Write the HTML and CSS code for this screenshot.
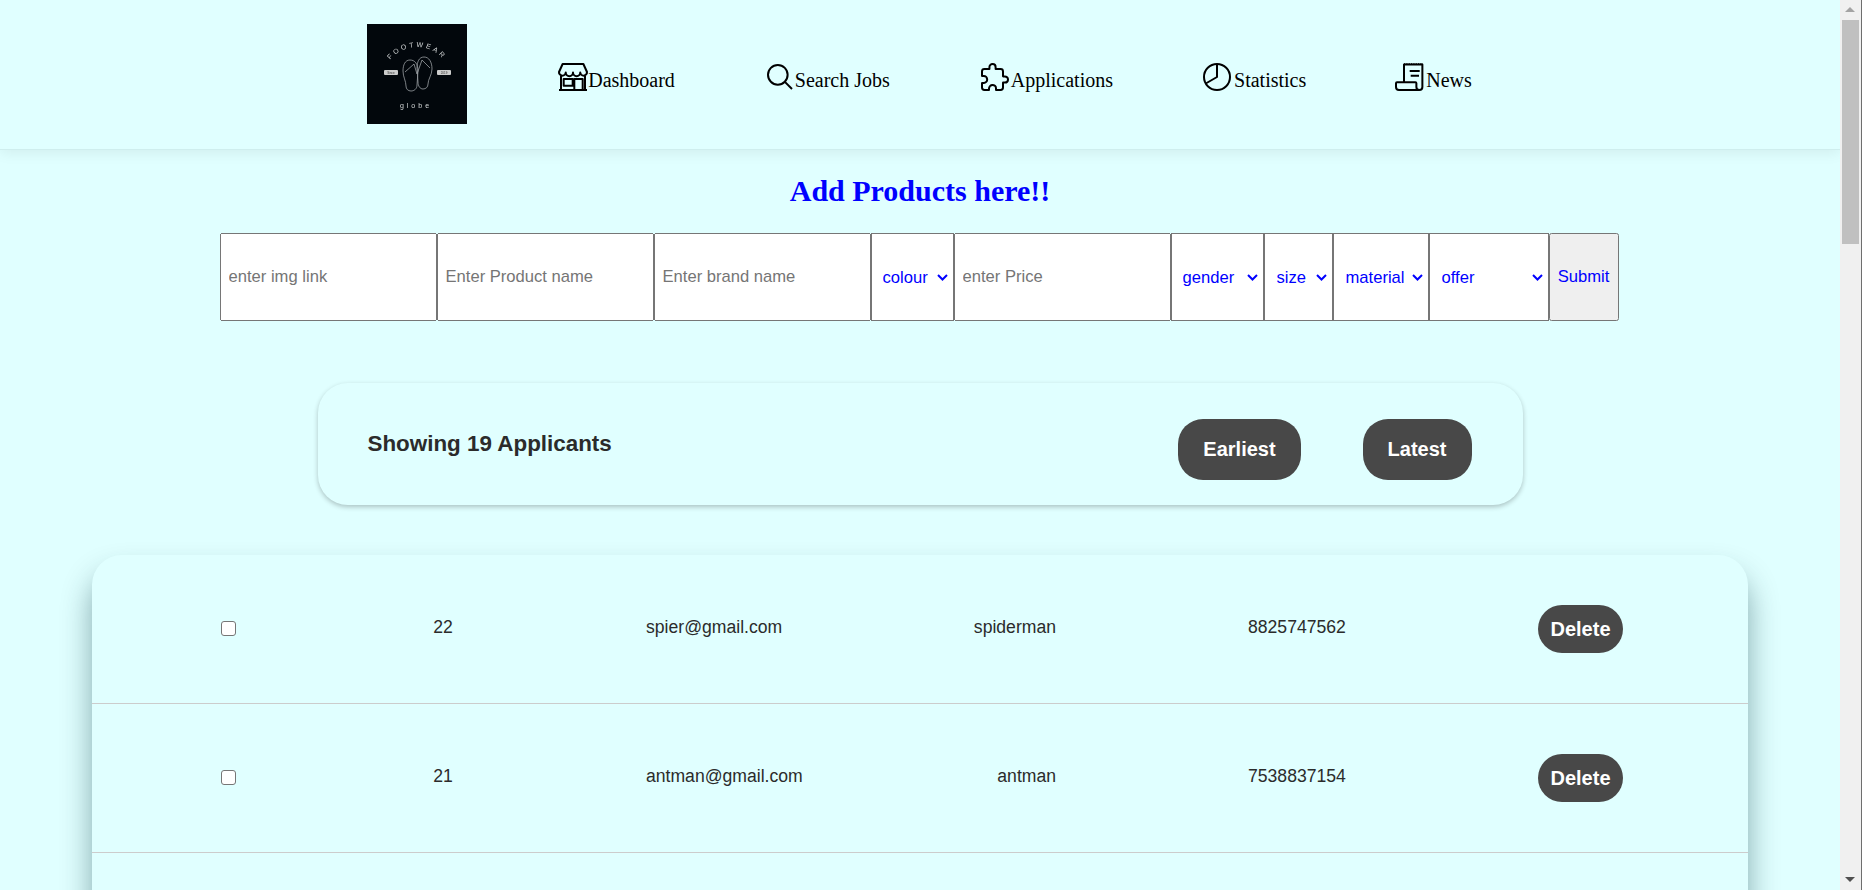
FILE: index.html
```html
<!DOCTYPE html>
<html lang="en">
<head>
<meta charset="UTF-8">
<title>Footwear Globe Admin</title>
<link rel="stylesheet" href="styles.css">
</head>
<body>
<nav class="navbar">
    <svg class="logo" viewBox="0 0 100 100">
        <rect width="100" height="100" fill="#02070c"/>
        <path id="logoArc" d="M19 43 A34 34 0 0 1 81 43" fill="none"/>
        <text class="logo-top"><textPath href="#logoArc" startOffset="50%" text-anchor="middle">FOOTWEAR</textPath></text>
        <rect x="17" y="46" width="14" height="5" rx="1" fill="#ccc"/>
        <rect x="70" y="46" width="14" height="5" rx="1" fill="#ccc"/>
        <text class="logo-badge" x="24" y="49.500">Since</text>
        <text class="logo-badge" x="77" y="49.500">2019</text>
        <g fill="none" stroke="#9a9fa3" stroke-width="0.8">
            <path d="M43 36c-5 0-7 5-7 11 0 6 3 10 3 15 0 3 2 5 5 5s6-2 6-6c0-5 1-9 1-14 0-7-3-11-8-11z"/>
            <path d="M57 33c-5 0-7 5-7 11 0 5 1 9 1 14 0 4 2 7 5 7s5-2 5-5c0-5 4-9 4-15 0-7-3-12-8-12z"/>
            <path d="M38 48l9-8 3 10M63 44l-8-8-5 14"/>
        </g>
        <text class="logo-bottom" x="49" y="84">globe</text>
    </svg>
    <a class="nav-link tight-1" href="#">
        <svg class="icon" viewBox="0 0 512 512"><path d="M90 48h332l58 128a54 54 0 0 1-108 8 58 58 0 0 1-116 0 58 58 0 0 1-116 0 54 54 0 0 1-108-8z"/><path d="M64 240v224M448 240v224M32 464h448"/><path d="M277 464V288h134v176M107 288h144v107H107z"/></svg>Dashboard
    </a>
    <a class="nav-link tight-1" href="#">
        <svg class="icon" viewBox="0 0 512 512"><path d="M221.09 64a157.09 157.09 0 1 0 157.09 157.09A157.1 157.1 0 0 0 221.09 64z"/><path d="M338.29 338.29L448 448"/></svg>Search Jobs
    </a>
    <a class="nav-link" href="#">
        <svg class="icon" viewBox="0 0 512 512"><path d="M413.66 246.1H386a2 2 0 0 1-2-2v-77.24A38.86 38.86 0 0 0 345.14 128H267.9a2 2 0 0 1-2-2V98.34c0-27.14-21.5-49.86-48.64-50.33a49.53 49.53 0 0 0-50.4 49.51V126a2 2 0 0 1-2 2H87.62A39.74 39.74 0 0 0 48 167.62V238a2 2 0 0 0 2 2h26.91c29.37 0 53.68 25.48 54.09 54.85.42 29.87-23.51 57.15-53.29 57.15H50a2 2 0 0 0-2 2v70.38A39.74 39.74 0 0 0 87.62 464H158a2 2 0 0 0 2-2v-20.93c0-30.28 24.75-56.35 55-57.06 30.1-.7 57 20.31 57 50.28V462a2 2 0 0 0 2 2h71.14A38.86 38.86 0 0 0 384 425.14v-78a2 2 0 0 1 2-2h28.48c27.63 0 49.52-22.67 49.52-50.4s-23.2-48.64-50.34-48.64z"/></svg>Applications
    </a>
    <a class="nav-link loose-1" href="#">
        <svg class="icon" viewBox="0 0 512 512"><circle cx="256" cy="256" r="208"/><path d="M256 48v208L76 360"/></svg>Statistics
    </a>
    <a class="nav-link loose-1" href="#">
        <svg class="icon" viewBox="0 0 512 512"><path d="M176 341V56h294v360a48 48 0 0 1-48 48H96a48 48 0 0 1-48-48v-59a16 16 0 0 1 16-16h294a16 16 0 0 1 16 16v59a48 48 0 0 0 48 48"/><path class="icon-teeth" d="M176 40h294"/><path d="M267 160h160M283 235h133"/></svg>News
    </a>
</nav>

<h2 class="form-title">Add Products here!!</h2>
<form class="product-form">
    <input class="w-wide" type="text" placeholder="enter img link">
    <input class="w-wide" type="text" placeholder="Enter Product name">
    <input class="w-wide" type="text" placeholder="Enter brand name">
    <select class="w-colour"><option>colour</option></select>
    <input class="w-wide" type="text" placeholder="enter Price">
    <select class="w-gender"><option>gender</option></select>
    <select class="w-size"><option>size</option></select>
    <select class="w-material"><option>material</option></select>
    <select class="w-offer"><option>offer</option></select>
    <button class="w-submit" type="button">Submit</button>
</form>

<section class="summary-card">
    <h3 class="summary-text">Showing 19 Applicants</h3>
    <div class="sort-buttons">
        <button class="dark-btn sort-btn" type="button">Earliest</button>
        <button class="dark-btn sort-btn" type="button">Latest</button>
    </div>
</section>

<section class="applicants">
    <div class="row">
        <input class="cell-check" type="checkbox">
        <span class="cell-id">22</span>
        <span class="cell-email">spier@gmail.com</span>
        <span class="cell-name">spiderman</span>
        <span class="cell-phone">8825747562</span>
        <button class="dark-btn delete-btn" type="button">Delete</button>
    </div>
    <div class="row">
        <input class="cell-check" type="checkbox">
        <span class="cell-id">21</span>
        <span class="cell-email">antman@gmail.com</span>
        <span class="cell-name">antman</span>
        <span class="cell-phone">7538837154</span>
        <button class="dark-btn delete-btn" type="button">Delete</button>
    </div>
</section>

<div class="scrollbar">
    <span class="arrow-up"></span>
    <span class="thumb"></span>
    <span class="arrow-down"></span>
</div>
</body>
</html>
```

FILE: styles.css
```css
body {
    margin: 0 22px 0 0;
    background-color: lightcyan;
    font-family: "Liberation Sans", Arial, sans-serif;
    color: #2b2b2b;
}

/* window scrollbar, it sits over the page */
.scrollbar {
    position: fixed;
    top: 0;
    right: 0;
    bottom: 0;
    display: flex;
    flex-direction: column;
    align-items: center;
    box-sizing: border-box;
    width: 22px;
    padding-right: 1px;
    background: #f0f0f0;
    border-right: 1px solid #6e6e6e;
}
.arrow-up,
.arrow-down {
    width: 0;
    height: 0;
    margin-top: 7px;
    border-left: 5px solid transparent;
    border-right: 5px solid transparent;
}
.arrow-up {
    border-bottom: 5px solid #a3a3a3;
}
.arrow-down {
    margin-top: auto;
    margin-bottom: 8px;
    border-top: 5px solid #505050;
}
.thumb {
    width: 17px;
    height: 224px;
    margin-top: 8px;
    background: #c0c0c0;
}

/* nav */
.navbar {
    display: flex;
    justify-content: center;
    gap: 88px;
    height: 150px;
    padding-top: 24px;
    box-sizing: border-box;
    border-bottom: 1px solid #cfeeee;
    box-shadow: 0 2px 14px rgba(0,0,0,0.08);
}
.logo {
    width: 100px;
    height: 100px;
    margin: 0 2px 0 -2px;
    filter: blur(0.3px);
}
.logo-top,
.logo-bottom {
    font-family: "Liberation Sans", Arial, sans-serif;
    font-size: 7px;
    fill: #d5d8d9;
}
.logo-top {
    letter-spacing: 2.6px;
}
.logo-bottom {
    letter-spacing: 3px;
    text-anchor: middle;
}
.logo-badge {
    font-family: "Liberation Sans", Arial, sans-serif;
    font-size: 3px;
    text-anchor: middle;
    fill: #333;
}
.nav-link {
    display: flex;
    align-items: flex-end;
    height: 32px;
    margin-top: 37px;
    font-family: "Liberation Serif", "Times New Roman", serif;
    font-size: 20px;
    line-height: 25px;
    color: #000;
    text-decoration: none;
}
.icon {
    width: 32px;
    height: 32px;
    fill: none;
    stroke: #000;
    stroke-width: 32;
    stroke-linejoin: round;
}
.icon-teeth {
    stroke-width: 14;
    stroke-dasharray: 14 14;
}
/* small optical fixes between icon and label */
.tight-1 { padding-right: 1px; }
.tight-1 .icon { margin-right: -1px; }
.loose-1 { margin-right: -1px; }
.loose-1 .icon { margin-right: 1px; }

/* add product form */
.form-title {
    margin: 25px 0 26px;
    text-align: center;
    font-family: "Liberation Serif", "Times New Roman", serif;
    font-size: 30px;
    line-height: 32px;
    color: blue;
}
.product-form {
    display: flex;
    justify-content: center;
    height: 88px;
    padding-right: 2px;
}
.product-form input,
.product-form select,
.product-form button {
    box-sizing: border-box;
    height: 88px;
    margin: 0;
    font-family: "Liberation Sans", Arial, sans-serif;
    font-size: 16.6px;
}
.product-form input {
    padding: 0 7px;
}
.product-form select,
.product-form button {
    color: blue;
}
.product-form select {
    appearance: none;
    padding: 0 0 0 11px;
    border: 1px solid #767676;
    border-radius: 0;
    background: #fff url("data:image/svg+xml,%3Csvg xmlns='http://www.w3.org/2000/svg' width='11' height='7'%3E%3Cpath d='M1 1l4.500 4.500L10 1' fill='none' stroke='%230000ff' stroke-width='2'/%3E%3C/svg%3E") no-repeat right 5px center;
}
.product-form .w-size,
.product-form .w-material,
.product-form .w-offer {
    padding-left: 12px;
}
.w-wide { width: 217px; }
.w-colour { width: 83px; }
.w-gender { width: 93px; }
.w-size { width: 69px; }
.w-material { width: 96px; }
.w-offer { width: 120px; }
.w-submit { width: 70px; padding: 0; }

/* summary */
.summary-card {
    display: flex;
    justify-content: space-between;
    align-items: center;
    box-sizing: border-box;
    width: 1205px;
    height: 122px;
    margin: 62px auto 50px;
    padding: 0 51px 0 50px;
    border-radius: 30px;
    box-shadow: 0 2px 5px rgba(0,0,0,0.24);
}
.summary-text {
    margin: 0 0 1px;
    font-size: 22.4px;
}
.sort-buttons {
    display: flex;
    gap: 62px;
    margin-top: 10px;
}
.dark-btn {
    border: none;
    background: #484848;
    color: #fff;
    font-family: "Liberation Sans", Arial, sans-serif;
    font-weight: bold;
    font-size: 20px;
}
.sort-btn {
    height: 61px;
    padding: 0 25px;
    border-radius: 25px;
}

/* applicants table */
.applicants {
    box-sizing: border-box;
    width: 1656px;
    min-height: 400px;
    margin: 0 auto;
    border-radius: 30px;
    box-shadow: 0 20px 30px rgba(0,50,60,0.42);
    background-color: lightcyan;
}
.row {
    display: flex;
    align-items: center;
    height: 149px;
    padding-left: 129px;
    box-sizing: border-box;
    border-bottom: 1px solid #ccc;
    font-size: 17.6px;
}
.cell-check {
    appearance: none;
    box-sizing: border-box;
    width: 15px;
    height: 15px;
    margin: 0 0 2px;
    background: #fff;
    border: 1px solid #767676;
    border-radius: 3px;
}
.cell-id {
    width: 100px;
    margin-left: 157px;
    text-align: center;
    margin-bottom: 3px;
}
.cell-email {
    width: 254px;
    margin-left: 153px;
    margin-bottom: 3px;
}
.cell-name {
    width: 156px;
    text-align: right;
    margin-bottom: 3px;
}
.cell-phone {
    width: 290px;
    margin-left: 192px;
    margin-bottom: 3px;
}
.delete-btn {
    width: 85px;
    height: 48px;
    padding: 0;
    border-radius: 24px;
}
```
